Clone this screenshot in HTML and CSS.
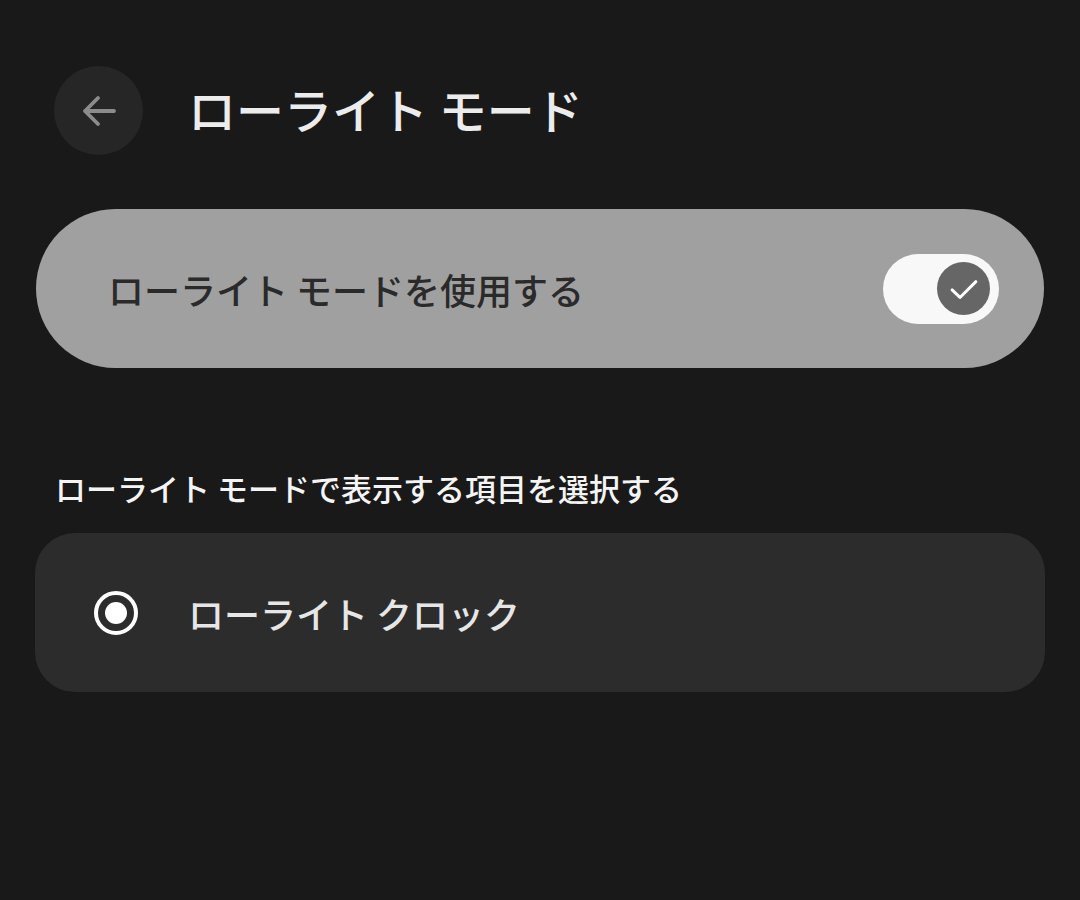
FILE: index.html
```html
<!DOCTYPE html>
<html lang="ja">
<head>
    <meta charset="utf-8">
    <title>ローライト モード</title>
    <link rel="stylesheet" href="styles.css">
</head>
<body>
    <div class="page">
        <div class="header">
            <div class="back-button">
                <svg width="48" height="48" viewBox="0 0 24 24">
                    <path d="M19.5 12H5M11.5 5.5L5 12L11.5 18.5" fill="none" stroke="#8c8c8c" stroke-width="1.9" stroke-linecap="round" stroke-linejoin="round"/>
                </svg>
            </div>
            <h1 class="title">ローライト モード</h1>
        </div>

        <div class="main-toggle">
            <span class="main-toggle-label">ローライト モードを使用する</span>
            <div class="switch">
                <div class="switch-thumb">
                    <svg width="44" height="44" viewBox="0 0 24 24">
                        <path d="M5.5 12.5L9.8 16.6L18.5 8" fill="none" stroke="#ffffff" stroke-width="1.6" stroke-linecap="round" stroke-linejoin="round"/>
                    </svg>
                </div>
            </div>
        </div>

        <div class="section-title">ローライト モードで表示する項目を選択する</div>

        <div class="option-card">
            <div class="radio"><div class="radio-dot"></div></div>
            <span class="option-label">ローライト クロック</span>
        </div>
    </div>
</body>
</html>
```

FILE: styles.css
```css
html, body {
    margin: 0;
    padding: 0;
    background-color: #191919;
}

body {
    font-family: "Noto Sans CJK JP", "Noto Sans", sans-serif;
    width: 1080px;
    height: 900px;
    overflow: hidden;
}

.page {
    padding: 66px 36px 0 36px;
}

.header {
    display: flex;
    align-items: center;
    padding-left: 18px;
    height: 89px;
}

.back-button {
    width: 89px;
    height: 89px;
    border-radius: 50%;
    background-color: #262626;
    display: flex;
    align-items: center;
    justify-content: center;
}

.title {
    margin: 0 0 0 45px;
    font-size: 48px;
    font-weight: 500;
    color: #ececec;
    line-height: 1;
    position: relative;
    top: -3px;
}

.main-toggle {
    margin-top: 54px;
    height: 159px;
    border-radius: 80px;
    background-color: #a0a0a0;
    display: flex;
    align-items: center;
    justify-content: space-between;
    padding: 0 45px 0 72px;
}

.main-toggle-label {
    font-size: 36px;
    font-weight: 500;
    color: #2a2a2a;
}

.switch {
    width: 116px;
    height: 70px;
    border-radius: 35px;
    background-color: #f8f8f8;
    display: flex;
    align-items: center;
    justify-content: flex-end;
    padding-right: 9px;
    box-sizing: border-box;
}

.switch-thumb {
    width: 53px;
    height: 53px;
    border-radius: 50%;
    background-color: #666666;
    display: flex;
    align-items: center;
    justify-content: center;
}

.section-title {
    margin-top: 100px;
    padding-left: 19px;
    font-size: 31px;
    font-weight: 500;
    color: #f4f4f4;
    line-height: 40px;
}

.option-card {
    margin-top: 25px;
    height: 159px;
    border-radius: 40px;
    background-color: #2c2c2c;
    display: flex;
    align-items: center;
    padding-left: 59px;
    margin-left: -1px;
    margin-right: -1px;
}

.radio {
    width: 44px;
    height: 44px;
    border-radius: 50%;
    border: 4px solid #ffffff;
    box-sizing: border-box;
    display: flex;
    align-items: center;
    justify-content: center;
}

.radio-dot {
    width: 22px;
    height: 22px;
    border-radius: 50%;
    background-color: #ffffff;
}

.option-label {
    margin-left: 50px;
    font-size: 36px;
    font-weight: 500;
    color: #e6e6e6;
}
```
